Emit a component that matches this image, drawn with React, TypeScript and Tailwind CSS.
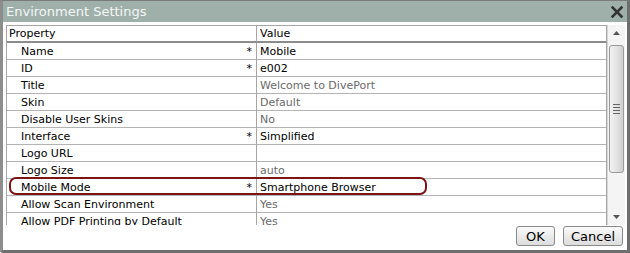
import React from 'react'

type Row = { name: string; value: string; req?: boolean; set?: boolean }

const rows: Row[] = [
  { name: 'Name', value: 'Mobile', req: true, set: true },
  { name: 'ID', value: 'e002', req: true, set: true },
  { name: 'Title', value: 'Welcome to DivePort' },
  { name: 'Skin', value: 'Default' },
  { name: 'Disable User Skins', value: 'No' },
  { name: 'Interface', value: 'Simplified', req: true, set: true },
  { name: 'Logo URL', value: '' },
  { name: 'Logo Size', value: 'auto' },
  { name: 'Mobile Mode', value: 'Smartphone Browser', req: true, set: true },
  { name: 'Allow Scan Environment', value: 'Yes' },
  { name: 'Allow PDF Printing by Default', value: 'Yes' },
]

function Scrollbar() {
  return (
    <div className="w-[18px] h-full flex flex-col bg-[#f4f4f4] border-l border-[#d6d6d6]">
      <div className="h-[16px] flex items-center justify-center">
        <svg width="7" height="4" viewBox="0 0 7 4"><path d="M0 4 L3.5 0 L7 4 Z" fill="#555" /></svg>
      </div>
      <div className="mx-[1px] mt-[4px] h-[128px] rounded-[3px] border border-[#9a9a9a] bg-gradient-to-r from-[#f2f2f2] via-[#e4e4e4] to-[#cfcfcf] flex items-center justify-center">
        <div className="flex flex-col gap-[2px]">
          <div className="w-[7px] h-px bg-[#666]" />
          <div className="w-[7px] h-px bg-[#666]" />
          <div className="w-[7px] h-px bg-[#666]" />
          <div className="w-[7px] h-px bg-[#666]" />
        </div>
      </div>
      <div className="flex-1" />
      <div className="h-[16px] flex items-center justify-center">
        <svg width="7" height="4" viewBox="0 0 7 4"><path d="M0 0 L3.5 4 L7 0 Z" fill="#555" /></svg>
      </div>
    </div>
  )
}

export default function App() {
  return (
    <div
      className="w-[630px] h-[253px] flex flex-col bg-white border-l-[3px] border-r-[3px] border-b-[3px] border-t border-l-[#8d8d8d] border-r-[#6e6e6e] border-b-[#6e6e6e] border-t-[#7a7a7a] rounded-bl-[3px] overflow-hidden text-[11px] text-black"
      style={{ fontFamily: '"DejaVu Sans", Verdana, sans-serif' }}
    >
      <div className="h-[21px] shrink-0 bg-[#9fb0ab] flex items-center justify-between pl-[3px] pr-[4px]">
        <span className="text-[13px] text-[#f4f6f5] leading-none">Environment Settings</span>
        <svg width="12" height="12" viewBox="0 0 12 12">
          <path d="M1.5 1.5 L10.5 10.5 M10.5 1.5 L1.5 10.5" stroke="#333" strokeWidth="2.6" strokeLinecap="square" />
        </svg>
      </div>

      <div className="flex-1 flex flex-col pl-[3px] pt-[3px]">
        <div className="h-[200px] flex">
          <div className="w-[601px] relative border-l border-t border-[#a6a6a6] overflow-hidden">
            <div className="grid grid-cols-[250px_1fr] h-[17px] border-b-2 border-[#8c8c8c] leading-[16px]">
              <div className="pl-[2px] border-r border-[#a6a6a6]">Property</div>
              <div className="pl-[3px] border-r border-[#a6a6a6]">Value</div>
            </div>
            {rows.map((r) => (
              <div key={r.name} className="grid grid-cols-[250px_1fr] h-[17px] border-b border-[#b4b4b4] leading-[17px]">
                <div className="pl-[14px] pr-[4px] flex justify-between border-r border-[#a6a6a6]">
                  <span>{r.name}</span>
                  <span>{r.req ? '*' : ''}</span>
                </div>
                <div className={`pl-[3px] border-r border-[#a6a6a6] ${r.set ? 'text-black' : 'text-[#6a6a6a]'}`}>{r.value}</div>
              </div>
            ))}
            <div className="absolute left-[2px] top-[151px] w-[418px] h-[18px] rounded-[7px] border-2 border-[#7d1414]" />
          </div>
          <Scrollbar />
        </div>
        <div className="flex justify-end gap-[8px] pr-[4px] pt-[1px]">
          <button className="w-[39px] h-[20px] rounded-[3px] border border-[#8a8a8a] bg-gradient-to-b from-[#fbfbfb] to-[#dcdcdc] text-[13px] leading-none text-black">OK</button>
          <button className="w-[60px] h-[20px] rounded-[3px] border border-[#8a8a8a] bg-gradient-to-b from-[#fbfbfb] to-[#dcdcdc] text-[13px] leading-none text-black">Cancel</button>
        </div>
      </div>
    </div>
  )
}
